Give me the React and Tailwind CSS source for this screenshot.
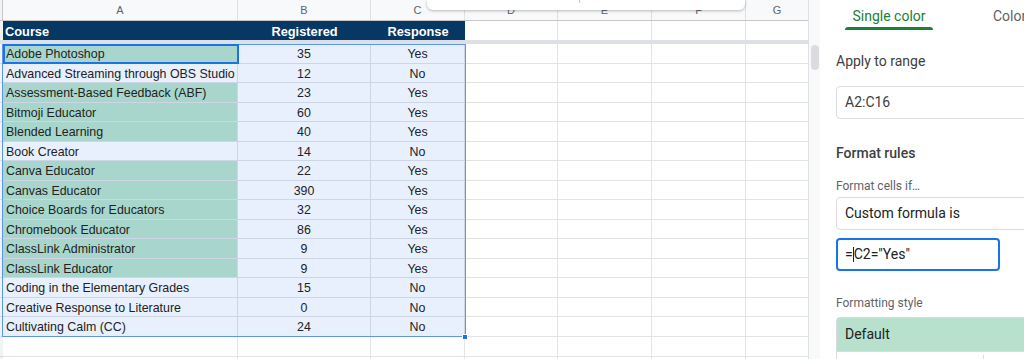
const rows = [
  ['Adobe Photoshop', 35, 'Yes'],
  ['Advanced Streaming through OBS Studio', 12, 'No'],
  ['Assessment-Based Feedback (ABF)', 23, 'Yes'],
  ['Bitmoji Educator', 60, 'Yes'],
  ['Blended Learning', 40, 'Yes'],
  ['Book Creator', 14, 'No'],
  ['Canva Educator', 22, 'Yes'],
  ['Canvas Educator', 390, 'Yes'],
  ['Choice Boards for Educators', 32, 'Yes'],
  ['Chromebook Educator', 86, 'Yes'],
  ['ClassLink Administrator', 9, 'Yes'],
  ['ClassLink Educator', 9, 'Yes'],
  ['Coding in the Elementary Grades', 15, 'No'],
  ['Creative Response to Literature', 0, 'No'],
  ['Cultivating Calm (CC)', 24, 'No'],
];

const cols = [
  { l: 'A', w: 'w-[235px]' },
  { l: 'B', w: 'w-[133px]' },
  { l: 'C', w: 'w-[94px]' },
  { l: 'D', w: 'w-[93px]' },
  { l: 'E', w: 'w-[94px]' },
  { l: 'F', w: 'w-[94px]' },
  { l: 'G', w: 'w-[62px]' },
];

function EmptyCells() {
  return (
    <>
      <div className="w-[93px] shrink-0 border-r border-b border-[#e2e3e3]" />
      <div className="w-[94px] shrink-0 border-r border-b border-[#e2e3e3]" />
      <div className="w-[94px] shrink-0 border-r border-b border-[#e2e3e3]" />
      <div className="w-[62px] shrink-0 border-b border-[#e2e3e3]" />
    </>
  );
}

function Sheet() {
  return (
    <div className="relative w-[808px] h-full shrink-0 font-['Liberation_Sans',Arial,sans-serif] text-[12.4px] text-[#222] whitespace-nowrap">
      {/* column letters */}
      <div className="flex h-[21px] bg-[#f8f9fa] border-b border-[#c7c7c7]">
        <div className="w-[3px] shrink-0 bg-[#f1f3f4] border-r border-[#c7c7c7]" />
        {cols.map((c, i) => (
          <div
            key={c.l}
            className={`${c.w} shrink-0 flex items-center justify-center text-[11px] text-[#5f6368] ${i < cols.length - 1 ? 'border-r border-[#e0e0e0]' : ''}`}
          >
            {c.l}
          </div>
        ))}
      </div>

      {/* header row */}
      <div className="flex h-[19px] text-[12.8px]">
        <div className="w-[3px] shrink-0 bg-[#f1f3f4]" />
        <div className="w-[235px] shrink-0 bg-[#073763] text-white font-bold flex items-center pl-[2px] pt-[2px]">Course</div>
        <div className="w-[133px] shrink-0 bg-[#073763] text-white font-bold flex items-center justify-center pt-[2px]">Registered</div>
        <div className="w-[94px] shrink-0 bg-[#073763] text-white font-bold flex items-center justify-center pt-[2px]">Response</div>
        <div className="w-[93px] shrink-0 border-r border-[#e2e3e3]" />
        <div className="w-[94px] shrink-0 border-r border-[#e2e3e3]" />
        <div className="w-[94px] shrink-0 border-r border-[#e2e3e3]" />
        <div className="w-[62px] shrink-0" />
      </div>

      {/* frozen divider */}
      <div className="h-[4px] bg-[#dde1e6]" />

      {/* data rows */}
      {rows.map(([name, n, res]) => {
        const yes = res === 'Yes';
        return (
          <div key={name} className="flex h-[19.5px]">
            <div className="w-[3px] shrink-0 bg-[#f1f3f4] border-b border-[#d9dce0]" />
            <div
              className={`w-[235px] shrink-0 flex items-center pl-[3px] pt-[3px] overflow-hidden border-r border-b border-[#cdd6e4] ${yes ? 'bg-[#a8d6cc]' : 'bg-[#e8f0fe]'}`}
            >
              {name}
            </div>
            <div className="w-[133px] shrink-0 flex items-center justify-center pt-[3px] bg-[#e8f0fe] border-r border-b border-[#cdd6e4]">{n}</div>
            <div className="w-[94px] shrink-0 flex items-center justify-center pt-[3px] bg-[#e8f0fe] border-r border-b border-[#cdd6e4]">{res}</div>
            <EmptyCells />
          </div>
        );
      })}

      {/* empty rows */}
      {[0, 1].map(i => (
        <div key={i} className="flex h-[20px]">
          <div className="w-[3px] shrink-0 bg-[#f1f3f4] border-b border-[#d9dce0]" />
          <div className="w-[235px] shrink-0 border-r border-b border-[#e2e3e3]" />
          <div className="w-[133px] shrink-0 border-r border-b border-[#e2e3e3]" />
          <div className="w-[94px] shrink-0 border-r border-b border-[#e2e3e3]" />
          <EmptyCells />
        </div>
      ))}

      {/* selection range + active cell */}
      <div className="absolute left-[2px] top-[44px] w-[464px] h-[293px] border border-[#5b95f0] pointer-events-none" />
      <div className="absolute left-[462px] top-[334px] w-[6px] h-[6px] bg-[#1a73e8] border border-white" />
      <div className="absolute left-[3px] top-[44px] w-[236px] h-[20px] border-2 border-[#1a73e8]" />

      {/* popup peeking from top */}
      <div className="absolute left-[427px] top-0 w-[318px] h-[10px] bg-white rounded-b-md shadow-[0_1px_3px_rgba(60,64,67,0.35)]">
        <div className="absolute left-[152px] top-0 w-px h-[3px] bg-[#c4c7c5]" />
      </div>
    </div>
  );
}

function Panel() {
  return (
    <div className="flex-1 h-full bg-white font-['Roboto',Arial,sans-serif] text-[#3c4043] overflow-hidden">
      {/* tabs */}
      <div className="relative h-[31px] whitespace-nowrap">
        <div className="absolute left-[25px] top-[6px] w-[88px] text-center text-[14px] text-[#188038]">Single color</div>
        <div className="absolute left-[25px] top-[27px] w-[88px] h-[3px] rounded-t-sm bg-[#188038]" />
        <div className="absolute left-[173px] top-[6px] text-[14px] text-[#5f6368]">Color scale</div>
      </div>

      <div className="pl-[16px]">
        <div className="mt-[21px] text-[14px] leading-[18px]">Apply to range</div>
        <div className="mt-[16px] h-[33px] w-[220px] border border-[#dadce0] rounded flex items-center pl-[8px] text-[14px] text-[#3c4043]">
          A2:C16
        </div>

        <div className="mt-[25px] text-[14px] leading-[18px] font-medium">Format rules</div>
        <div className="mt-[17px] text-[12px] leading-[14px] text-[#5f6368]">Format cells if…</div>
        <div className="mt-[4px] h-[33px] w-[220px] border border-[#dadce0] rounded flex items-center pl-[8px] text-[14px] text-[#202124]">
          Custom formula is
        </div>
        <div className="mt-[8px] h-[33px] w-[164px] border-2 border-[#1a73e8] rounded flex items-center pl-[7px] text-[14px] text-[#202124]">
          =<span className="inline-block w-px h-[15px] bg-[#202124]" />C2="Yes"
        </div>

        <div className="mt-[25px] text-[12px] leading-[14px] text-[#5f6368]">Formatting style</div>
        <div className="mt-[7px] w-[220px] border border-[#dadce0] rounded-t">
          <div className="h-[33px] bg-[#b7e1cd] flex items-center pl-[8px] text-[14px] text-[#202124]">Default</div>
          <div className="h-[20px] border-t border-[#dadce0] relative">
            <div className="absolute left-[146px] top-[3px] w-px h-[16px] bg-[#dadce0]" />
          </div>
        </div>
      </div>
    </div>
  );
}

export default function App() {
  return (
    <div className="flex w-[1024px] h-[359px] overflow-hidden bg-white">
      <Sheet />
      {/* scrollbar */}
      <div className="w-[12px] h-full shrink-0 bg-[#f8f9fa] border-l border-[#e0e0e0] relative">
        <div className="absolute left-[2px] top-[45px] w-[8px] h-[25px] rounded-full bg-[#dadce0]" />
      </div>
      <Panel />
    </div>
  );
}
